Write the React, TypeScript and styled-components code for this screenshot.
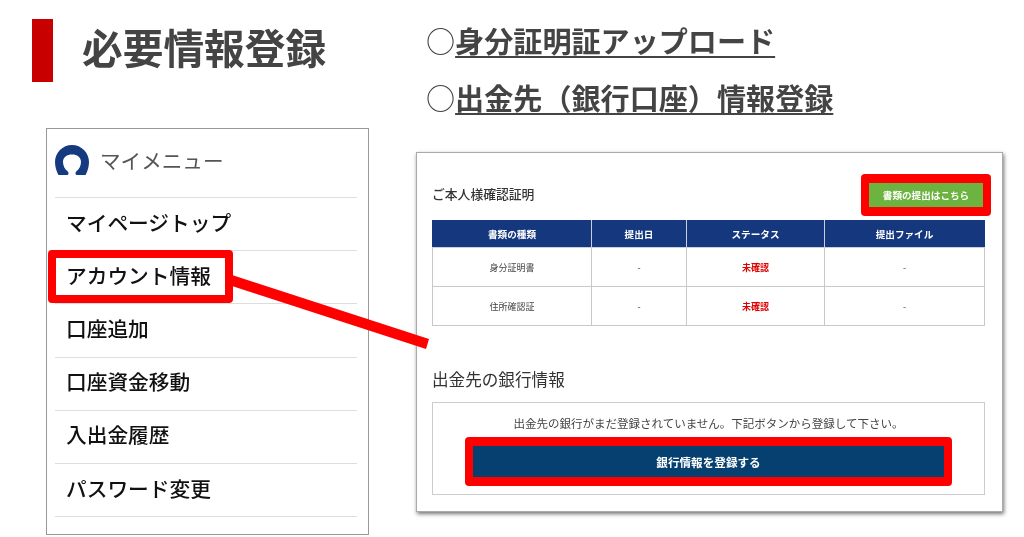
import styled, { createGlobalStyle } from 'styled-components';

const GlobalStyle = createGlobalStyle`
  html, body {
    margin: 0;
    padding: 0;
    background: #fff;
  }
  body {
    font-family: "Noto Sans CJK JP", "Noto Sans", sans-serif;
  }
`;

const menuItems = ['マイページトップ', 'アカウント情報', '口座追加', '口座資金移動', '入出金履歴', 'パスワード変更'];

const documents = [
  { name: '身分証明書' },
  { name: '住所確認証' },
];

const App = () => (
  <Page>
    <GlobalStyle />
    <LeftColumn>
      <TitleRow>
        <TitleBar />
        <Title>必要情報登録</Title>
      </TitleRow>
      <Menu>
        <MenuHead>
          <svg width='34' height='30' viewBox='1 1 34 30'>
            <path
              fill='#153a80'
              d='M18 1C8.600 1 1 8.600 1 18c0 4.400 1.200 8.600 3.400 13l9.200 0c1.200-.4 1.200-2.200.2-3.400C10.600 25 9 21.500 9 18 9 13 13 10.500 18 10.500s9 2.500 9 7.500c0 3.500-1.600 7-4.800 9.600-1 1.200-1 3 .2 3.400l9.200 0c2.200-4.400 3.400-8.600 3.400-13C35 8.600 27.400 1 18 1z'
            />
          </svg>
          <MenuHeadLabel>マイメニュー</MenuHeadLabel>
        </MenuHead>
        {menuItems.map((item) => (
          <MenuItem key={item}>
            <MenuLabel $marked={item === 'アカウント情報'}>{item}</MenuLabel>
          </MenuItem>
        ))}
      </Menu>
    </LeftColumn>

    <RightColumn>
      <Heading>
        <Circle>○</Circle>
        <u>身分証明証アップロード</u>
      </Heading>
      <Heading>
        <Circle>○</Circle>
        <u>出金先（銀行口座）情報登録</u>
      </Heading>

      <Panel>
        <PanelHead>
          <SectionTitle>ご本人様確認証明</SectionTitle>
          <Marked>
            <SubmitButton>書類の提出はこちら</SubmitButton>
          </Marked>
        </PanelHead>
        <DocTable>
          <colgroup>
            <col width='159' />
            <col width='95' />
            <col width='138' />
            <col width='160' />
          </colgroup>
          <thead>
            <tr>
              <HeadCell>書類の種類</HeadCell>
              <HeadCell>提出日</HeadCell>
              <HeadCell>ステータス</HeadCell>
              <HeadCell>提出ファイル</HeadCell>
            </tr>
          </thead>
          <tbody>
            {documents.map((doc) => (
              <tr key={doc.name}>
                <BodyCell>{doc.name}</BodyCell>
                <BodyCell>-</BodyCell>
                <StatusCell>未確認</StatusCell>
                <BodyCell>-</BodyCell>
              </tr>
            ))}
          </tbody>
        </DocTable>

        <BankTitle>出金先の銀行情報</BankTitle>
        <BankBox>
          <BankMessage>出金先の銀行がまだ登録されていません。下記ボタンから登録して下さい。</BankMessage>
          <Marked>
            <BankButton>銀行情報を登録する</BankButton>
          </Marked>
        </BankBox>
      </Panel>
    </RightColumn>

    <Connector width='1024' height='537' viewBox='0 0 1024 537'>
      <polygon fill='#ff0000' points='232,275 429,339 426,349 232,286' />
    </Connector>
  </Page>
);

export default App;

const Page = styled.div`
  position: relative;
  display: flex;
  width: 1024px;
  height: 537px;
  overflow: hidden;
  background: #fff;
  filter: blur(0.4px);
`;

const LeftColumn = styled.div`
  width: 385px;
  padding: 19px 0 0 32px;
  box-sizing: border-box;
`;

const TitleRow = styled.div`
  display: flex;
  align-items: center;
  gap: 29px;
  height: 63px;
`;

const TitleBar = styled.div`
  width: 21px;
  height: 63px;
  background: #c80000;
`;

const Title = styled.h1`
  margin: 0 0 8px;
  font-size: 40.7px;
  line-height: 56px;
  font-weight: 700;
  color: #444;
  white-space: nowrap;
`;

const Menu = styled.nav`
  box-sizing: border-box;
  width: 323px;
  height: 407px;
  margin: 46px 0 0 14px;
  padding: 0 11px 0 8px;
  border: 1px solid #999;
`;

const MenuHead = styled.div`
  display: flex;
  align-items: center;
  gap: 11px;
  box-sizing: border-box;
  height: 69px;
  padding-bottom: 7px;
  border-bottom: 1px solid #ddd;
`;

const MenuHeadLabel = styled.span`
  font-size: 20.6px;
  color: #555;
`;

const MenuItem = styled.div`
  display: flex;
  align-items: center;
  box-sizing: border-box;
  height: 53.2px;
  padding: 0 0 5px 11px;
  border-bottom: 1px solid #ddd;
`;

const MenuLabel = styled.span<{ $marked?: boolean }>`
  position: relative;
  font-size: 20.7px;
  font-weight: 500;
  line-height: 28px;
  color: #111;
  white-space: nowrap;

  ${(p) =>
    p.$marked &&
    `
    &::after {
      content: '';
      position: absolute;
      inset: -11px -22px -14px -18px;
      border: 8px solid #ff0000;
      border-radius: 4px;
    }
  `}
`;

const RightColumn = styled.div`
  flex: 1;
  padding: 17px 21px 0 32px;
  box-sizing: border-box;
`;

const Heading = styled.div`
  display: flex;
  height: 46px;
  padding-left: 10px;
  font-size: 29.1px;
  line-height: 46px;
  font-weight: 700;
  color: #444;
  white-space: nowrap;

  & + & {
    margin-top: 11px;
  }

  u {
    text-underline-offset: 3px;
    text-decoration-thickness: 2px;
  }
`;

const Circle = styled.span`
  font-weight: 400;
`;

const Panel = styled.section`
  box-sizing: border-box;
  width: 587px;
  height: 360px;
  margin-top: 32px;
  padding: 21px 17px 0 15px;
  border: 1px solid #aaa;
  box-shadow: 1px 2px 4px rgba(0, 0, 0, 0.55);
`;

const PanelHead = styled.div`
  display: flex;
  align-items: center;
  justify-content: space-between;
  height: 42px;
  margin-right: -6px;
`;

const SectionTitle = styled.h2`
  margin: 0 0 3px;
  font-size: 12.8px;
  font-weight: 500;
  color: #333;
`;

const Marked = styled.div`
  display: flex;
  padding: 9px 8px;
  background: #ff0000;
  border-radius: 4px;
`;

const SubmitButton = styled.button`
  width: 114px;
  height: 24px;
  padding: 0;
  border: 0;
  background: #6cb33f;
  color: #fff;
  font-family: inherit;
  font-size: 9.6px;
  font-weight: 700;
`;

const DocTable = styled.table`
  width: 552px;
  margin-top: 4px;
  border-collapse: collapse;
  table-layout: fixed;
`;

const HeadCell = styled.th`
  height: 27px;
  padding: 0;
  border: 1px solid #c9d0dc;
  border-top: 0;
  background: #14377d;
  color: #fff;
  font-size: 9.6px;
  font-weight: 700;

  &:first-child {
    border-left-color: #14377d;
  }
  &:last-child {
    border-right-color: #14377d;
  }
`;

const BodyCell = styled.td`
  height: 38px;
  padding: 0;
  border: 1px solid #c8c8c8;
  color: #444;
  font-size: 9px;
  text-align: center;
`;

const StatusCell = styled(BodyCell)`
  color: #e00000;
  font-weight: 700;
`;

const BankTitle = styled.h2`
  margin: 41px 0 0;
  font-size: 16.6px;
  line-height: 24px;
  font-weight: 400;
  color: #333;
`;

const BankBox = styled.div`
  box-sizing: border-box;
  width: 553px;
  height: 93px;
  margin-top: 11px;
  padding: 0 32px;
  border: 1px solid #ccc;
`;

const BankMessage = styled.p`
  margin: 0;
  height: 34px;
  font-size: 11.5px;
  line-height: 40px;
  color: #444;
  text-align: center;
  white-space: nowrap;
`;

const BankButton = styled.button`
  width: 100%;
  height: 31px;
  padding: 0;
  border: 0;
  background: #064070;
  color: #fff;
  font-family: inherit;
  font-size: 11.6px;
  font-weight: 700;
`;

const Connector = styled.svg`
  position: absolute;
  left: 0;
  top: 0;
  pointer-events: none;
`;
